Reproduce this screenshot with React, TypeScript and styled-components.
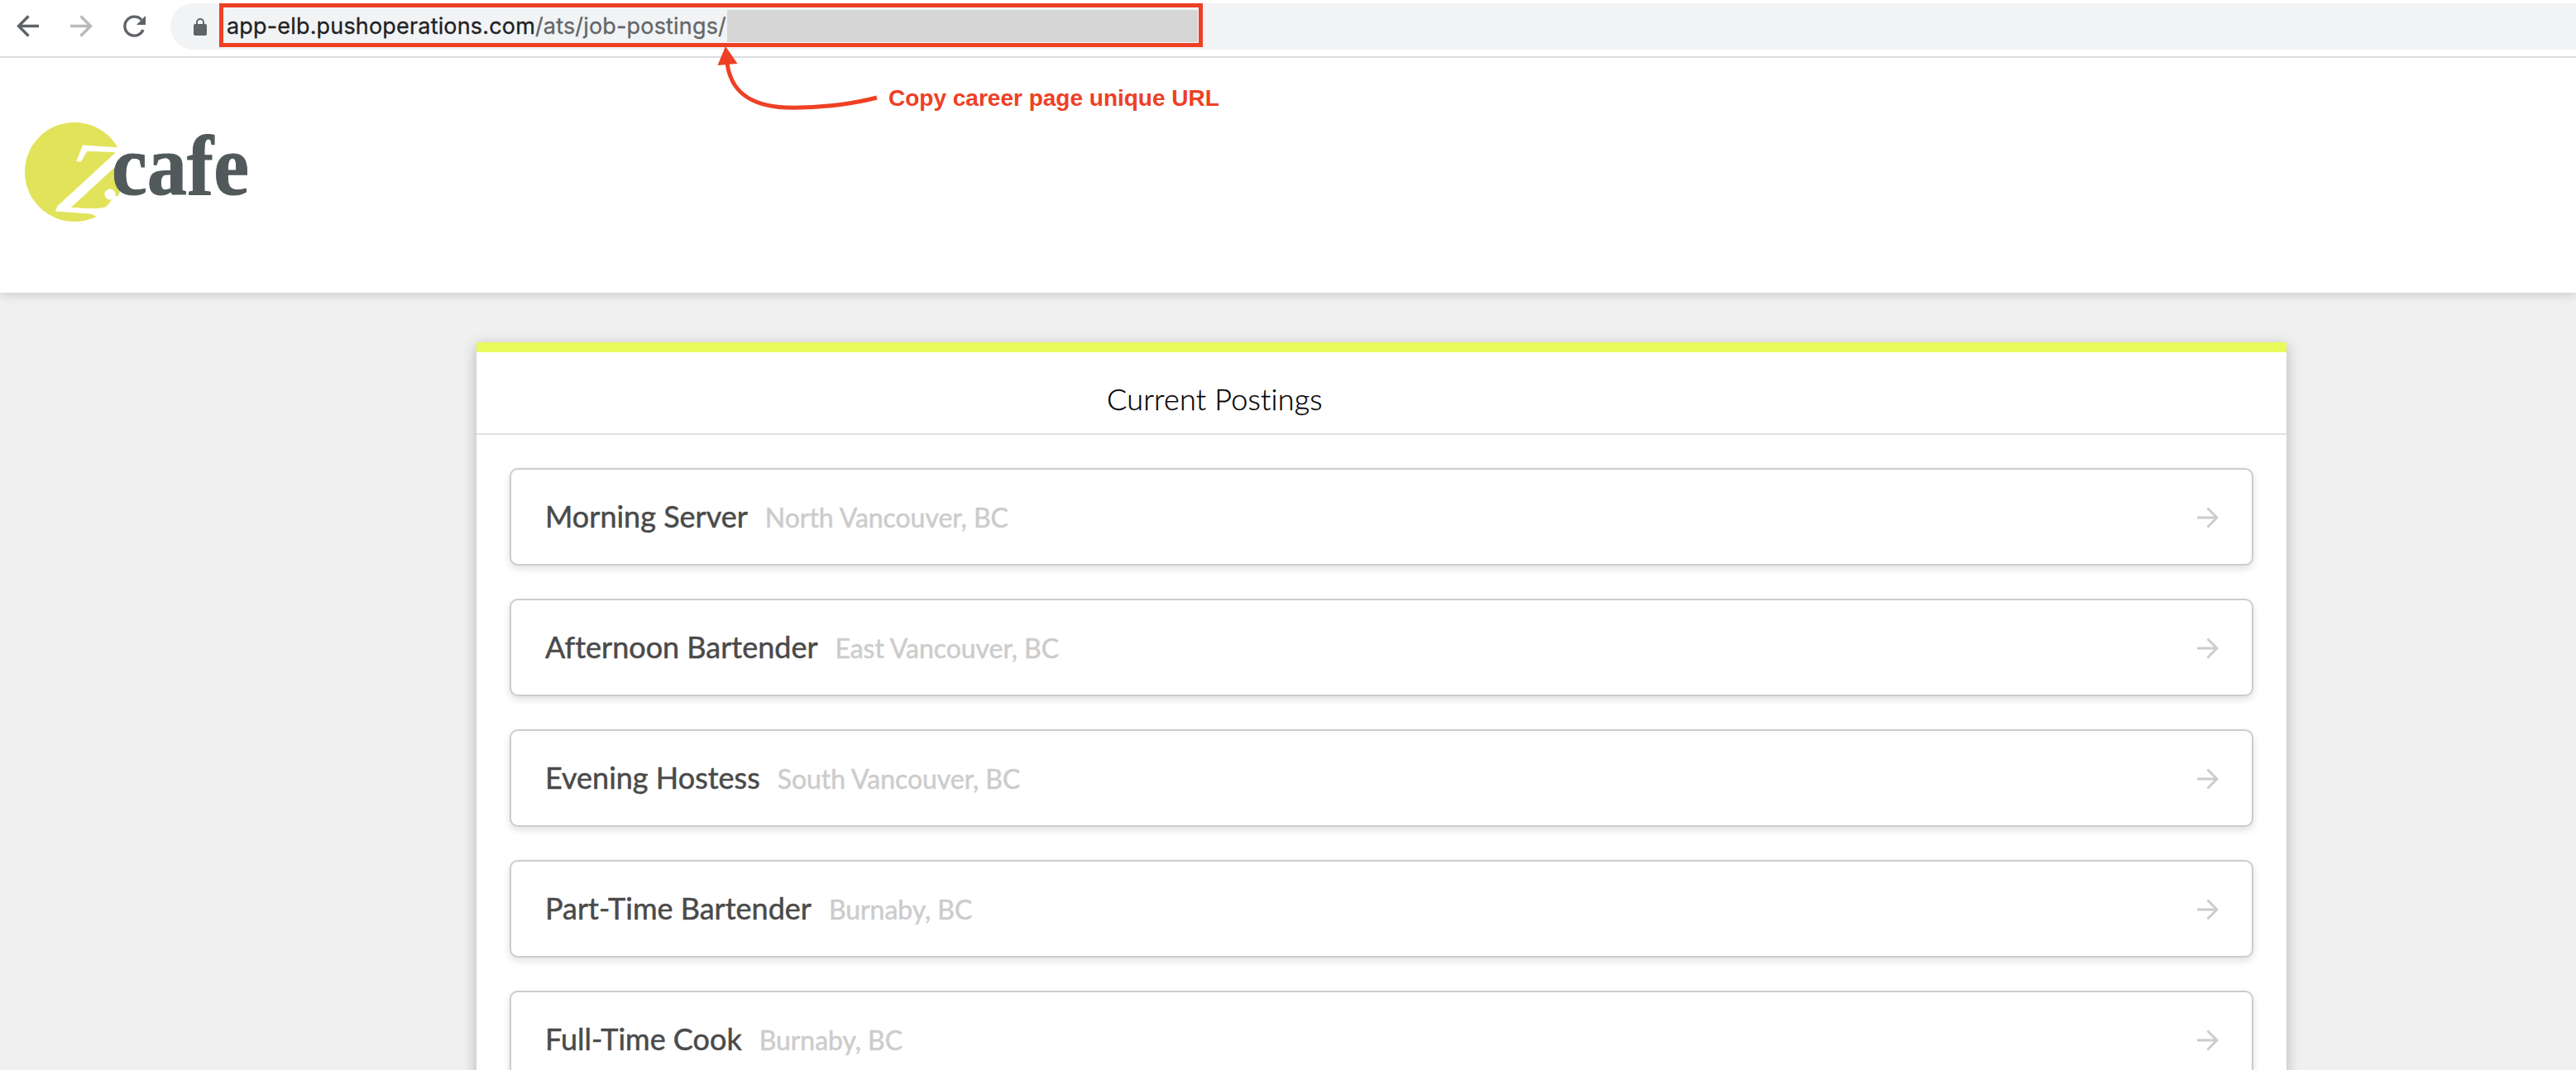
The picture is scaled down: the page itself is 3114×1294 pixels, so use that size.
import React from "react";
import styled, { createGlobalStyle } from "styled-components";

const GlobalStyle = createGlobalStyle`
  * {
    box-sizing: border-box;
  }
  body {
    margin: 0;
    background: #f0f0f0;
    font-family: Lato, "Liberation Sans", sans-serif;
    font-variant-ligatures: none;
    overflow: hidden;
  }
`;

const Page = styled.div`
  display: flex;
  flex-direction: column;
  height: 1294px;
  overflow: hidden;
`;

const BrowserBar = styled.div`
  position: relative;
  z-index: 2;
  display: flex;
  flex: none;
  align-items: flex-start;
  height: 70px;
  padding-top: 4px;
  background: #fff;
  border-bottom: 2px solid #dadce0;
`;

const NavButtons = styled.div`
  display: flex;
  flex: none;
  align-items: center;
  gap: 24px;
  width: 206px;
  height: 56px;
  padding-left: 14px;
`;

const NavIcon = styled.svg<{ $color: string }>`
  flex: none;
  width: 40px;
  height: 40px;
  fill: none;
  stroke: ${(props) => props.$color};
  stroke-width: 3.4;
`;

const AddressBar = styled.div`
  display: flex;
  flex: 1;
  height: 56px;
  background: #f1f3f4;
  border-radius: 28px 0 0 28px;
`;

const LockIcon = styled.svg`
  flex: none;
  width: 16px;
  height: 22px;
  margin: 18px 15px 0 28px;
`;

const UrlBox = styled.div`
  display: flex;
  width: 1189px;
  height: 53px;
  padding: 3px 1px 0 4px;
  border: 5px solid #ee4024;
`;

const UrlText = styled.div`
  flex: none;
  width: 605px;
  padding-top: 1px;
  color: #636669;
  font: 400 27px/38px Inter, "Liberation Sans", sans-serif;
  letter-spacing: 0.17px;
  white-space: nowrap;
  -webkit-text-stroke: 0.3px;
`;

const UrlHost = styled.span`
  color: #1f2124;
`;

const UrlMask = styled.div`
  flex: 1;
  height: 39px;
  background: #d6d6d6;
`;

const Callout = styled.div`
  position: absolute;
  top: 56px;
  left: 864px;
  display: flex;
  align-items: flex-start;
`;

const CalloutArrow = styled.svg`
  flex: none;
  width: 200px;
  height: 80px;
`;

const CalloutText = styled.div`
  margin: 46px 0 0 10px;
  color: #ee4024;
  font: 700 28px/34px "Liberation Sans", Arial, sans-serif;
  white-space: nowrap;
`;

const CompanyHeader = styled.header`
  position: relative;
  flex: none;
  height: 284px;
  padding: 70px 0 0 20px;
  background: #fff;
  box-shadow: 0 2px 12px rgba(0, 0, 0, 0.17);
`;

const LogoImage = styled.svg`
  display: block;
  width: 300px;
  height: 160px;
`;

const Panel = styled.main`
  flex: none;
  width: 2188px;
  height: 1000px;
  margin: 60px 0 0 576px;
  background: #fff;
  border-top: 12px solid #e9fa5b;
  box-shadow: 0 4px 16px rgba(0, 0, 0, 0.25);
`;

const PanelTitle = styled.h1`
  height: 100px;
  margin: 0;
  padding-left: 762px;
  border-bottom: 2px solid #e0e0e0;
  color: #000;
  font-size: 36px;
  font-weight: 300;
  letter-spacing: 0.2px;
  line-height: 112px;
  -webkit-text-stroke: 0.3px #000;
`;

const PostingList = styled.div`
  display: flex;
  flex-direction: column;
  gap: 40px;
  padding: 40px;
`;

const PostingCard = styled.a`
  display: flex;
  align-items: center;
  height: 118px;
  padding: 0 40px 0 41px;
  background: #fff;
  border: 2px solid #ccc;
  border-radius: 10px;
  box-shadow: 0 4px 10px rgba(0, 0, 0, 0.12);
`;

const PostingText = styled.div`
  display: flex;
  flex: 1;
  align-items: baseline;
  gap: 21px;
  padding-bottom: 2px;
`;

const JobTitle = styled.span`
  color: #4a4a4a;
  font-size: 36px;
  -webkit-text-stroke: 0.5px #4a4a4a;
`;

const JobLocation = styled.span`
  color: #ccc;
  font-size: 32px;
  letter-spacing: -0.05px;
  -webkit-text-stroke: 0.5px #ccc;
`;

const ArrowIcon = styled.svg`
  flex: none;
  width: 28px;
  height: 28px;
  margin-top: 2px;
  fill: none;
  stroke: #ccc;
  stroke-width: 3;
`;

interface Posting {
  title: string;
  location: string;
}

const postings: Posting[] = [
  { title: "Morning Server", location: "North Vancouver, BC" },
  { title: "Afternoon Bartender", location: "East Vancouver, BC" },
  { title: "Evening Hostess", location: "South Vancouver, BC" },
  { title: "Part-Time Bartender", location: "Burnaby, BC" },
  { title: "Full-Time Cook", location: "Burnaby, BC" },
];

const Logo: React.FC = () => (
  <LogoImage viewBox="20 140 300 160">
    <circle cx="90" cy="208" r="60" fill="#e1e35a" />
    <path d="M100 254L117 262L122 275L155 260L150 230L138 243L126 251Z" fill="#fff" />
    <text
      transform="translate(66 255) rotate(4) skewX(-7)"
      fontFamily="Liberation Serif, serif"
      fontStyle="italic"
      fontSize="124"
      fill="#fff"
      stroke="#fff"
      strokeWidth="1"
      textLength="76"
      lengthAdjust="spacingAndGlyphs"
    >
      Z
    </text>
    <circle cx="133" cy="235" r="6.5" fill="#fff" />
    <text
      x="135"
      y="235"
      fontFamily="Liberation Serif, serif"
      fontWeight="700"
      fontSize="103"
      fill="#51595a"
      stroke="#51595a"
      strokeWidth="1"
      textLength="166"
      lengthAdjust="spacingAndGlyphs"
    >
      cafe
    </text>
  </LogoImage>
);

const PostingRow: React.FC<Posting> = (props) => (
  <PostingCard>
    <PostingText>
      <JobTitle>{props.title}</JobTitle>
      <JobLocation>{props.location}</JobLocation>
    </PostingText>
    <ArrowIcon viewBox="0 0 28 28">
      <path d="M2 14H26M14.5 2.5L26 14L14.5 25.5" />
    </ArrowIcon>
  </PostingCard>
);

export default function App() {
  return (
    <Page>
      <GlobalStyle />
      <BrowserBar>
        <NavButtons>
          <NavIcon viewBox="0 0 40 40" $color="#5f6368">
            <path d="M33 19.5H9M20.5 7.5L8.5 19.5L20.5 31.5" />
          </NavIcon>
          <NavIcon viewBox="0 0 40 40" $color="#bababb">
            <path d="M7 19.5H31M19.5 7.5L31.5 19.5L19.5 31.5" />
          </NavIcon>
          <NavIcon viewBox="0 0 40 40" $color="#5f6368">
            <path d="M31 24A11.5 11.5 0 1 1 29 12" />
            <path d="M34 7V18H23Z" fill="#5f6368" stroke="none" />
          </NavIcon>
        </NavButtons>
        <AddressBar>
          <LockIcon viewBox="0 0 16 22">
            <rect y="7" width="16" height="14" rx="2" fill="#616365" />
            <path d="M4 8V5A4 4 0 0 1 12 5V8" fill="none" stroke="#616365" strokeWidth="2" />
          </LockIcon>
          <UrlBox>
            <UrlText>
              <UrlHost>app-elb.pushoperations.com</UrlHost>/ats/job-postings/
            </UrlText>
            <UrlMask />
          </UrlBox>
        </AddressBar>
        <Callout>
          <CalloutArrow viewBox="864 56 200 80">
            <path d="M879 76C883 108 903 128 950 130C984 131 1026 127 1060 118" fill="none" stroke="#ee4024" strokeWidth="5" />
            <path d="M877 56L891.5 77L867.5 79Z" fill="#ee4024" />
          </CalloutArrow>
          <CalloutText>Copy career page unique URL</CalloutText>
        </Callout>
      </BrowserBar>
      <CompanyHeader>
        <Logo />
      </CompanyHeader>
      <Panel>
        <PanelTitle>Current Postings</PanelTitle>
        <PostingList>
          {postings.map((posting) => (
            <PostingRow key={posting.title} {...posting} />
          ))}
        </PostingList>
      </Panel>
    </Page>
  );
}
